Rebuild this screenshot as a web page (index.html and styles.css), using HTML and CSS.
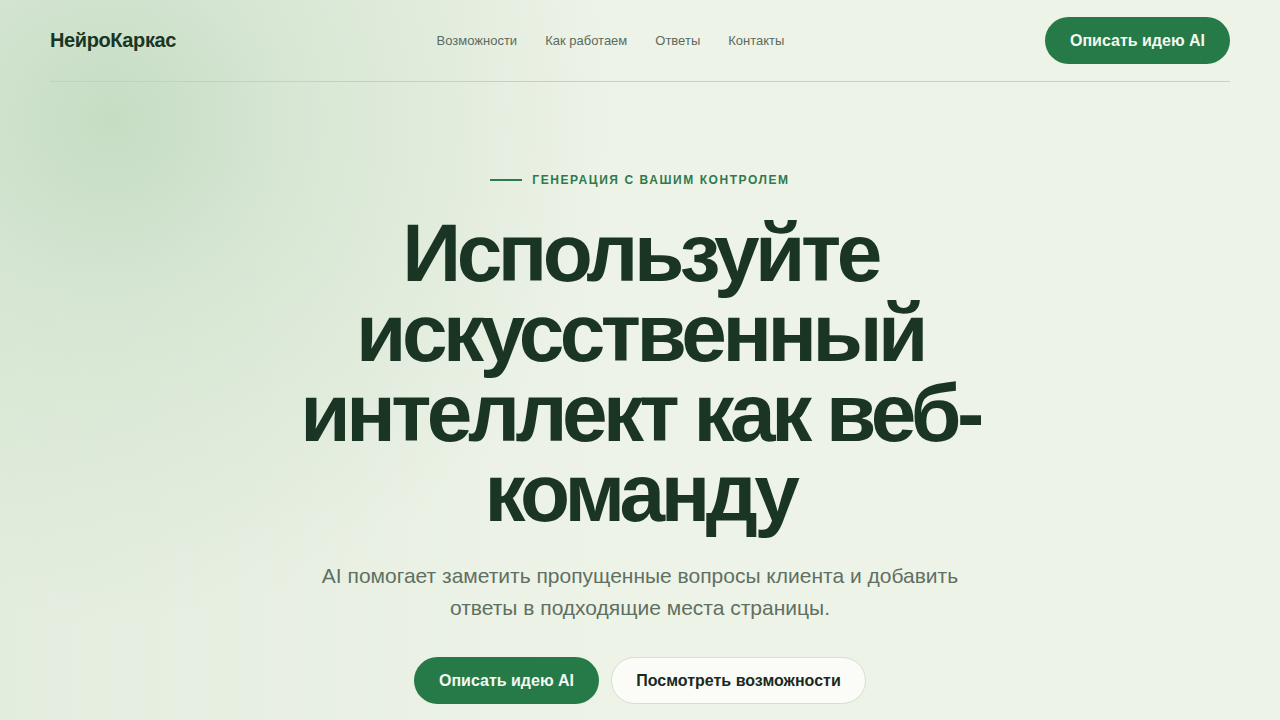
FILE: index.html
```html
<!DOCTYPE html>
<html lang="ru">
<head>
<meta charset="utf-8">
<title>НейроКаркас</title>
<link rel="stylesheet" href="styles.css">
</head>
<body>
<div class="page">
  <header class="header">
    <a class="logo" href="#">НейроКаркас</a>
    <nav class="nav">
      <a href="#">Возможности</a>
      <a href="#">Как работаем</a>
      <a href="#">Ответы</a>
      <a href="#">Контакты</a>
    </nav>
    <a class="btn btn-primary" href="#">Описать идею AI</a>
  </header>
  <section class="hero">
    <div class="eyebrow"><span class="eyebrow-line"></span>Генерация с вашим контролем</div>
    <h1 class="title">Используйте искусственный интеллект как веб-команду</h1>
    <p class="lead">AI помогает заметить пропущенные вопросы клиента и добавить ответы в подходящие места страницы.</p>
    <div class="actions">
      <a class="btn btn-primary" href="#">Описать идею AI</a>
      <a class="btn btn-secondary" href="#">Посмотреть возможности</a>
    </div>
  </section>
</div>
</body>
</html>
```

FILE: styles.css
```css
* { box-sizing: border-box; }
html, body { margin: 0; padding: 0; }
body {
  font-family: "Liberation Sans", Arial, sans-serif;
  color: #1a3524;
  background-color: #eef3e8;
  background-image:
    radial-gradient(circle at 110px 120px, rgba(196, 220, 194, 0.95) 0, rgba(205, 225, 203, 0.6) 190px, rgba(238, 243, 232, 0) 500px),
    linear-gradient(90deg, rgba(220, 233, 216, 0.6) 0, rgba(238, 243, 232, 0) 50%);
  min-height: 720px;
  overflow: hidden;
}
a { text-decoration: none; }
.page { padding: 0 50px; }
.header {
  display: flex;
  align-items: center;
  justify-content: space-between;
  padding: 17px 0;
  border-bottom: 1px solid #c4d0c4;
}
.logo {
  font-size: 20px;
  font-weight: 700;
  letter-spacing: -0.02em;
  color: #1a3524;
}
.nav { display: flex; gap: 28px; }
.nav a { font-size: 13px; color: #5b6b5d; }
.btn {
  display: inline-flex;
  align-items: center;
  justify-content: center;
  height: 47px;
  padding: 0;
  border-radius: 24px;
  font-size: 16px;
  font-weight: 700;
  white-space: nowrap;
}
.btn-primary { background: #267a47; color: #f3f8f1; width: 185px; }
.btn-secondary {
  background: #fbfcf8;
  color: #1a2a1f;
  border: 1px solid #d6ddd3;
  width: 255px;
}
.hero {
  display: flex;
  flex-direction: column;
  align-items: center;
  text-align: center;
  padding-top: 90px;
}
.eyebrow {
  display: flex;
  align-items: center;
  gap: 10px;
  font-size: 12px;
  line-height: 16px;
  font-weight: 700;
  letter-spacing: 0.13em;
  text-transform: uppercase;
  color: #2e7a4c;
}
.eyebrow-line { width: 32px; height: 2px; background: #2e7a4c; }
.title {
  margin: 25px 0 0;
  max-width: 700px;
  font-size: 82px;
  line-height: 80px;
  font-weight: 700;
  letter-spacing: -0.055em;
  color: #1a3524;
}
.lead {
  margin: 27px 0 0;
  max-width: 660px;
  font-size: 21px;
  line-height: 32px;
  color: #5f7062;
}
.actions { display: flex; gap: 12px; margin-top: 33px; }
```
